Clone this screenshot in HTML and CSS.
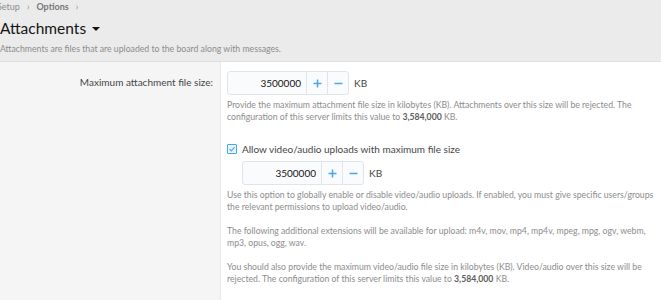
FILE: index.html
```html
<!DOCTYPE html>
<html lang="en">

<head>
    <meta charset="UTF-8" />
    <title>Attachments</title>
    <link rel="stylesheet" href="styles.css">
</head>

<body>

    <div class="page-header">
        <div class="crumbs">
            <span>Setup</span>
            <span class="sep">&rsaquo;</span>
            <span class="crumb-bold">Options</span>
            <span class="sep">&rsaquo;</span>
        </div>
        <h1 class="page-title">Attachments <span class="caret"></span></h1>
        <p class="page-desc">Attachments are files that are uploaded to the board along with messages.</p>
    </div>

    <div class="block">
        <div class="form-row">
            <div class="row-label">Maximum attachment file size:</div>
            <div class="row-input">
                <div class="spin-line">
                    <div class="spin">
                        <span class="spin-value">3500000</span>
                        <span class="spin-btn" title="Increase">
                            <svg width="9" height="9" viewBox="0 0 9 9"><path d="M4.5 0.5 V8.5 M0.5 4.5 H8.5" stroke="#47a7eb" stroke-width="1.5"/></svg>
                        </span>
                        <span class="spin-btn" title="Decrease">
                            <svg width="9" height="9" viewBox="0 0 9 9"><path d="M0.5 4.5 H8.5" stroke="#47a7eb" stroke-width="1.5"/></svg>
                        </span>
                    </div>
                    <span class="unit">KB</span>
                </div>
                <p class="hint">Provide the maximum attachment file size in kilobytes (KB). Attachments over this size will be rejected. The configuration of this server limits this value to <b>3,584,000</b> KB.</p>
            </div>
        </div>

        <div class="form-row">
            <div class="row-label"></div>
            <div class="row-input second">
                <label class="check">
                    <span class="check-box">
                        <svg width="8" height="8" viewBox="0 0 8 8"><path d="M1.5 4.2 L3.3 6 L6.6 2.2" fill="none" stroke="#47a7eb" stroke-width="1.1"/></svg>
                    </span>
                    Allow video/audio uploads with maximum file size
                </label>
                <div class="spin-line nested">
                    <div class="spin">
                        <span class="spin-value">3500000</span>
                        <span class="spin-btn" title="Increase">
                            <svg width="9" height="9" viewBox="0 0 9 9"><path d="M4.5 0.5 V8.5 M0.5 4.5 H8.5" stroke="#47a7eb" stroke-width="1.5"/></svg>
                        </span>
                        <span class="spin-btn" title="Decrease">
                            <svg width="9" height="9" viewBox="0 0 9 9"><path d="M0.5 4.5 H8.5" stroke="#47a7eb" stroke-width="1.5"/></svg>
                        </span>
                    </div>
                    <span class="unit">KB</span>
                </div>
                <p class="hint">Use this option to globally enable or disable video/audio uploads. If enabled, you must give specific users/groups the relevant permissions to upload video/audio.</p>
                <p class="hint">The following additional extensions will be available for upload: m4v, mov, mp4, mp4v, mpeg, mpg, ogv, webm, mp3, opus, ogg, wav.</p>
                <p class="hint">You should also provide the maximum video/audio file size in kilobytes (KB). Video/audio over this size will be rejected. The configuration of this server limits this value to <b>3,584,000</b> KB.</p>
            </div>
        </div>
    </div>

</body>

</html>
```

FILE: styles.css
```css
* {
    box-sizing: border-box;
}

body {
    margin: 0;
    font-family: Lato, "Open Sans", sans-serif;
    color: #141414;
    background: #fff;
}

.page-header {
    background: #ebebeb;
    border-bottom: 1px solid #e0e0e0;
    height: 62px;
    padding-top: 1px;
}

.crumbs {
    margin-left: -3px;
    font-size: 9px;
    color: #8c8c8c;
    line-height: 12px;
    display: flex;
    gap: 7px;
}

.crumb-bold {
    font-weight: bold;
    color: #777;
}

.page-title {
    margin: 4px 0 0;
    font-size: 15.5px;
    font-weight: normal;
    line-height: 22px;
    display: flex;
    align-items: center;
    gap: 6px;
}

.caret {
    width: 0;
    height: 0;
    border-left: 4px solid transparent;
    border-right: 4px solid transparent;
    border-top: 4px solid #141414;
    margin-top: 2px;
}

.page-desc {
    margin: 4px 0 0;
    font-size: 8.7px;
    line-height: 12px;
    color: #8c8c8c;
}

.block {
    height: 238px;
    display: flex;
    flex-direction: column;
    background: linear-gradient(to right, #f5f5f5 0, #f5f5f5 220px, #e8e8e8 220px, #e8e8e8 221px, #fff 221px);
}

.form-row {
    display: flex;
}

.row-label {
    width: 221px;
    flex: 0 0 221px;
    padding: 14px 8px 0 0;
    text-align: right;
    font-size: 10px;
    color: #454545;
}

.row-input {
    padding: 9px 4px 0 6px;
    flex: 1;
}

.row-input.second {
    padding-top: 19px;
}

.spin-line {
    display: flex;
    align-items: center;
    gap: 5px;
}

.spin-line.nested {
    margin: 5px 0 0 15px;
}

.spin {
    display: flex;
    height: 24px;
    border: 1px solid #dfe5eb;
    border-radius: 3px;
    background: #f9fbfd;
    font-size: 10px;
}

.spin-value {
    width: 78px;
    text-align: right;
    padding-right: 5px;
    line-height: 22px;
    color: #141414;
}

.spin-btn {
    width: 21px;
    border-left: 1px solid #dfe5eb;
    display: flex;
    align-items: center;
    justify-content: center;
}

.unit {
    font-size: 10px;
    color: #454545;
}

.hint {
    margin: 4px 0 0;
    font-size: 8.7px;
    line-height: 12px;
    color: #8c8c8c;
}

.hint + .hint {
    margin-top: 12px;
}

.hint b {
    color: #5c5c5c;
}

.check {
    display: flex;
    align-items: center;
    gap: 5px;
    font-size: 10px;
    color: #454545;
    line-height: 14px;
}

.check-box {
    width: 10px;
    height: 10px;
    border: 1px solid #47a7eb;
    border-radius: 1px;
    background: #eaf4fc;
    display: flex;
    align-items: center;
    justify-content: center;
}
```
